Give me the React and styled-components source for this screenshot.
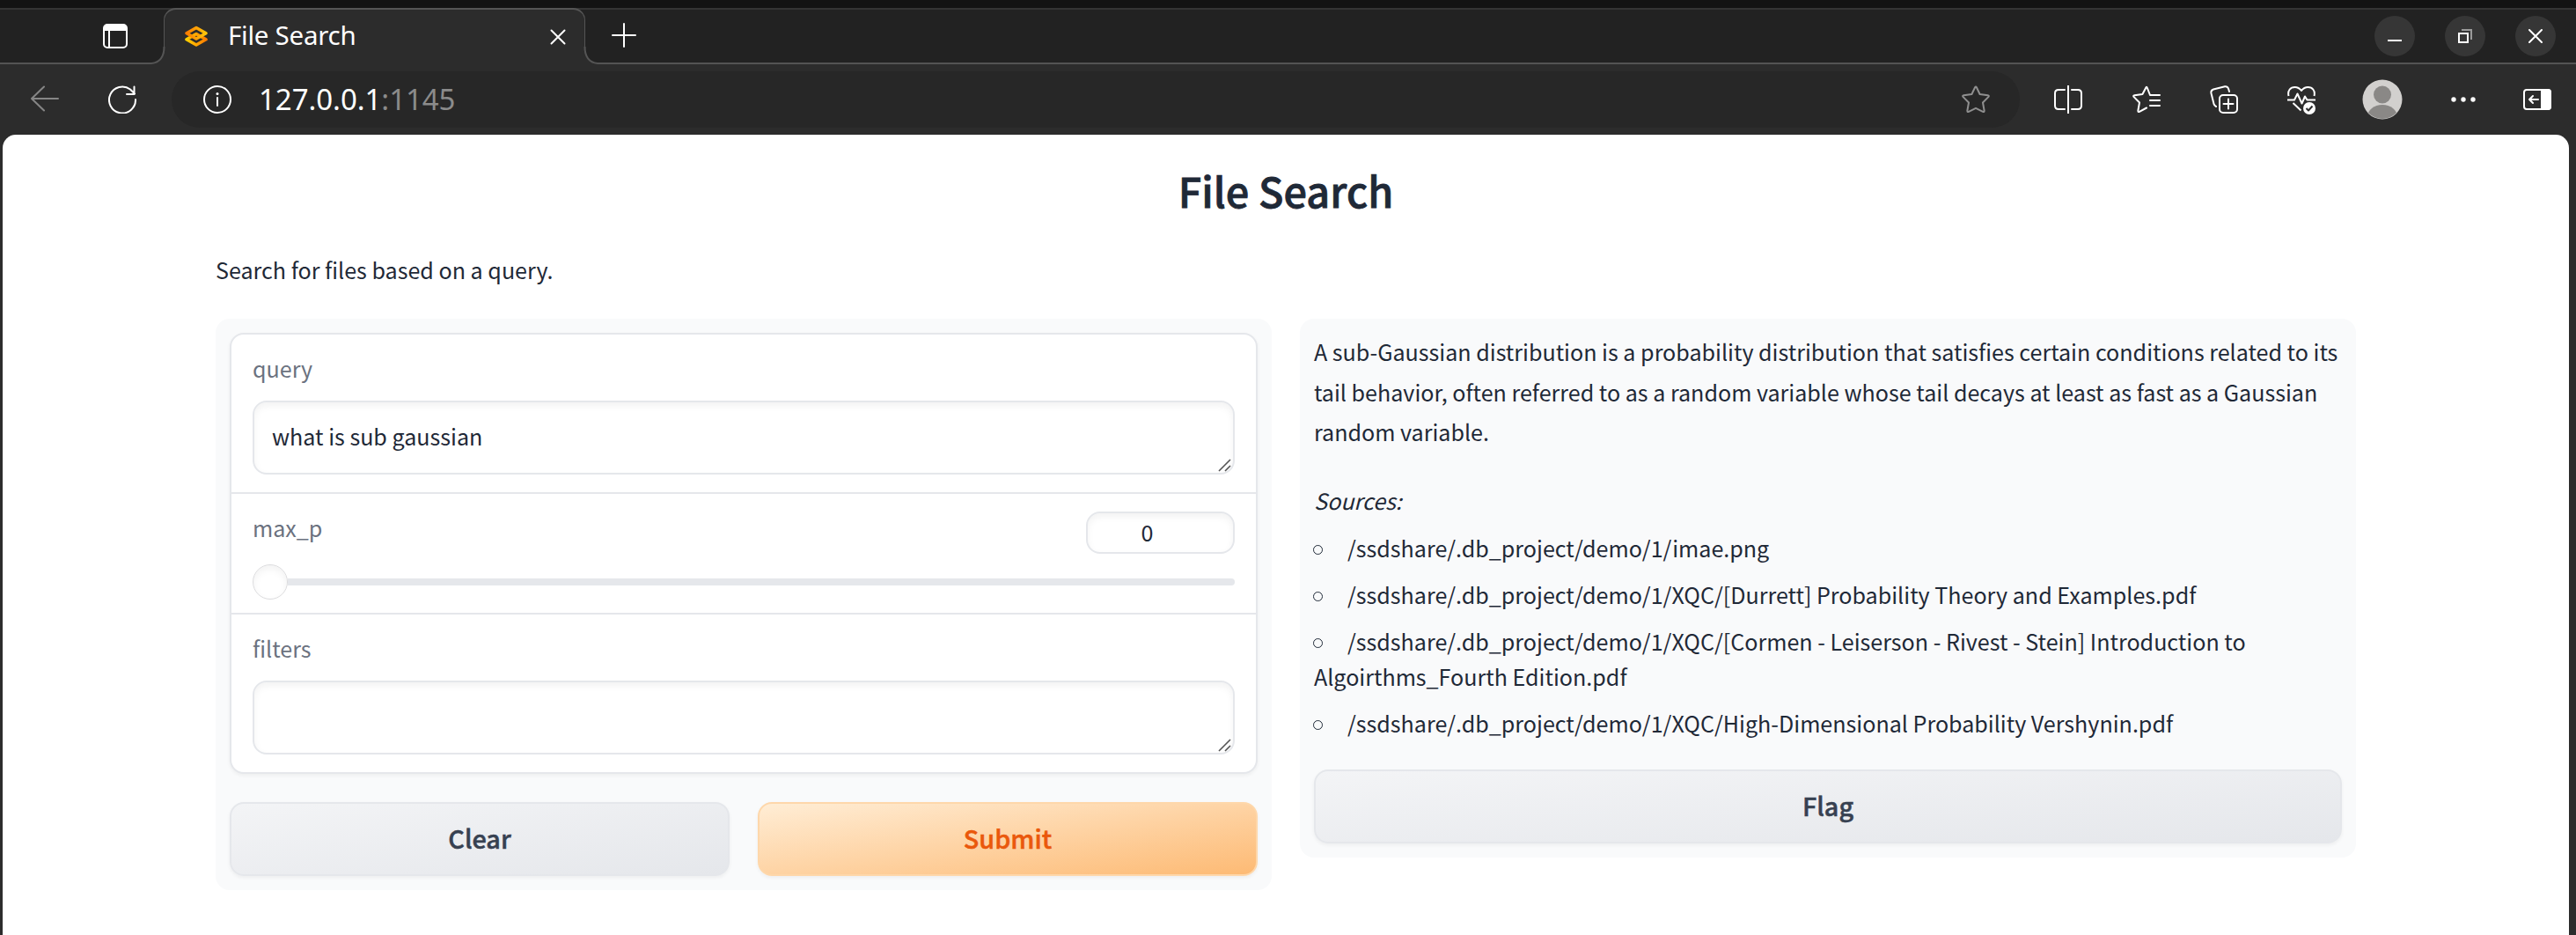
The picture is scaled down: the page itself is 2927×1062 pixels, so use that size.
import React from "react";
import styled, { createGlobalStyle, css } from "styled-components";

const Global = createGlobalStyle`
  *, *::before, *::after { box-sizing: border-box; }
  html, body, #root { height: 100%; }
  body { margin: 0; background: #2c2c2c; overflow: hidden; }
`;

const uiFont = `"Noto Sans", "Open Sans", sans-serif`;
const pageFont = `"Noto Sans CJK SC", "Noto Sans", sans-serif`;

const Window = styled.div`
  height: 1062px;
  width: 2927px;
  display: flex;
  flex-direction: column;
  background: #2c2c2c;
`;

const TabStrip = styled.div`
  flex: none;
  height: 73px;
  border-top: 9px solid #131313;
  background: #222;
  box-shadow: inset 0 2px #343434, inset 0 -2px #545454;
  display: flex;
  align-items: stretch;
`;

const TabActions = styled.div`
  width: 186px;
  padding: 18px 0 0 117px;
`;

const Tab = styled.div`
  position: relative;
  width: 479px;
  height: 64px;
  background: #2c2c2c;
  border: 1.5px solid #555;
  border-top-width: 2px;
  border-bottom: 0;
  border-radius: 14px 14px 0 0;
  display: flex;
  align-items: center;
  padding: 0 21px 0 22px;
`;

const TabFoot = styled.svg`
  position: absolute;
  bottom: 0;
  ${(p) => (p.$side === "left" ? "left: -15px;" : "right: -15px; transform: scaleX(-1);")}
`;

const Logo = styled.svg`
  margin-bottom: 2px;
`;

const TabTitle = styled.span`
  flex: 1;
  margin: 0 0 4px 22px;
  font: 400 29.5px/40px ${uiFont};
  letter-spacing: -0.25px;
  color: #fff;
`;

const NewTab = styled.div`
  padding: 17px 0 0 30px;
  flex: 1;
`;

const WindowButtons = styled.div`
  display: flex;
  gap: 34px;
  padding: 9px 23px 0 0;
`;

const WindowButton = styled.div`
  width: 46px;
  height: 46px;
  border-radius: 50%;
  background: #363636;
  display: flex;
  align-items: center;
  justify-content: center;
`;

const Toolbar = styled.div`
  flex: none;
  height: 80px;
  display: flex;
  align-items: center;
`;

const NavCell = styled.div`
  width: ${(p) => p.$w || 88}px;
  display: flex;
  align-items: center;
  justify-content: center;
`;

const AddressBar = styled.div`
  width: 2100px;
  height: 64px;
  margin: 0 11px 0 19px;
  padding: 0 34px 0 36px;
  border-radius: 32px;
  background: #272727;
  display: flex;
  align-items: center;
`;

const Url = styled.span`
  flex: 1;
  margin-left: 31px;
  font: 400 33px/48px ${uiFont};
  letter-spacing: -0.05px;
  color: #fff;
  white-space: nowrap;
`;

const Port = styled.span`
  color: #8b8b8b;
`;

const Page = styled.main`
  flex: 1;
  margin: 0 8px 0 3px;
  padding: 32px 242px 0;
  background: #fff;
  border-radius: 15px 15px 0 0;
  font-family: ${pageFont};
  font-size: 25.08px;
  color: #1f2937;
`;

const Title = styled.h1`
  margin: 0;
  text-align: center;
  font-size: 46.8px;
  line-height: 62px;
  font-weight: 500;
  letter-spacing: 0.05px;
  -webkit-text-stroke: 0.8px currentColor;
`;

const Description = styled.p`
  margin: 38px 0 35px;
  line-height: 42px;
`;

const Columns = styled.div`
  display: flex;
  align-items: flex-start;
  gap: 32px;
`;

const Panel = styled.section`
  flex: 1;
  min-width: 0;
  padding: 16px;
  border-radius: 16px;
  background: #f9fafb;
`;

const Form = styled.div`
  border: 2px solid #e5e7eb;
  border-radius: 16px;
  background: #fff;
  box-shadow: 0 2px 4px rgba(0, 0, 0, 0.05);
`;

const Field = styled.div`
  height: ${(p) => p.$h}px;
  padding: 20px 24px 0;
  & + & {
    border-top: 2px solid #e5e7eb;
  }
`;

const Label = styled.div`
  line-height: 36px;
  color: #6b7280;
`;

const box = css`
  border: 2px solid #e5e7eb;
  border-radius: 16px;
  background: #fff;
  box-shadow: inset 0 4px 8px rgba(0, 0, 0, 0.05);
`;

const TextBox = styled.div`
  ${box}
  position: relative;
  height: 84px;
  margin-top: 19px;
  padding: 18px 20px;
  line-height: 40px;
`;

const Grip = styled.svg`
  position: absolute;
  right: 2px;
  bottom: 1px;
`;

const SliderHead = styled.div`
  display: flex;
  justify-content: space-between;
`;

const NumberBox = styled.div`
  ${box}
  width: 169px;
  height: 48px;
  padding-right: 30px;
  text-align: center;
  line-height: 42px;
`;

const Slider = styled.div`
  display: flex;
  align-items: center;
  height: 40px;
  margin-top: 12px;
`;

const Thumb = styled.div`
  width: 40px;
  height: 40px;
  border-radius: 50%;
  border: 1px solid #dcdcde;
  background: #fff;
  box-shadow: inset 0 4px 8px rgba(0, 0, 0, 0.05);
`;

const Track = styled.div`
  flex: 1;
  height: 8px;
  border-radius: 0 4px 4px 0;
  background: #e5e7eb;
`;

const Buttons = styled.div`
  display: flex;
  gap: 32px;
  margin-top: 32px;
`;

const Button = styled.button`
  flex: 1;
  height: 84px;
  padding: 0 0 2px;
  border: 2px solid ${(p) => (p.$primary ? "#fed7aa" : "#e5e7eb")};
  border-radius: 16px;
  background: ${(p) =>
    p.$primary
      ? "linear-gradient(to bottom right, #ffedd5, #fdba74)"
      : "linear-gradient(to bottom right, #f3f4f6, #e5e7eb)"};
  box-shadow: 0 2px 4px rgba(0, 0, 0, 0.05);
  color: ${(p) => (p.$primary ? "#ea580c" : "#374151")};
  font: 500 28.8px/40px ${pageFont};
  -webkit-text-stroke: 0.5px currentColor;
`;

const Answer = styled.p`
  margin: -1px 0 0;
  line-height: 45.5px;
  white-space: nowrap;
`;

const Sources = styled.em`
  display: block;
  margin-top: 32.5px;
  line-height: 44px;
`;

const List = styled.ul`
  margin: 12px 0 0;
  padding: 0 0 1px;
  list-style: none;
`;

const Item = styled.li`
  line-height: 40px;
  white-space: nowrap;
  & + & {
    margin-top: 13px;
  }
`;

const Bullet = styled.span`
  display: inline-block;
  width: 11px;
  height: 11px;
  margin: 0 28px 3px -1px;
  border: 1.5px solid #1f2937;
  border-radius: 50%;
`;

const Icon = ({ w = 32, h = 32, c = "#fff", sw = 2, children }) => (
  <svg width={w} height={h} viewBox={`0 0 ${w} ${h}`} fill="none" stroke={c} strokeWidth={sw} strokeLinecap="round" strokeLinejoin="round">
    {children}
  </svg>
);

const starPath =
  "M15.1 2.2Q16 .6 16.9 2.2L20.6 10 29.6 11.3Q31.6 11.7 30.3 13.1L24 19.5 25.6 28.5Q25.8 30.6 24 29.9L16 25.8 8 29.9Q6.2 30.6 6.4 28.5L8 19.5 1.7 13.1Q.4 11.7 2.4 11.3L11.4 10Z";

const Foot = ({ side }) => (
  <TabFoot $side={side} width="16" height="20" viewBox="0 0 16 20">
    <path d="M0 20V19Q15 18 15 0H16V20Z" fill="#2c2c2c" />
    <path d="M0 19Q14.5 17.5 14.5 0" fill="none" stroke="#555" strokeWidth="2" />
  </TabFoot>
);

const ResizeGrip = () => (
  <Grip width="15" height="15" viewBox="0 0 15 15" stroke="#555" strokeWidth="1.6">
    <path d="M1 14L14 1M8 14L14 8" />
  </Grip>
);

export default function App() {
  return (
    <Window>
      <Global />
      <TabStrip>
        <TabActions>
          <Icon w={28} h={28}>
            <rect x="1" y="1" width="26" height="26" rx="4" />
            <path d="M1 8V5Q1 1 5 1H23Q27 1 27 5V8Z" fill="#fff" stroke="none" />
            <path d="M1 7H27M7 8V27" />
          </Icon>
        </TabActions>
        <Tab>
          <Foot side="left" />
          <Foot side="right" />
          <Logo width="28" height="24" viewBox="0 0 28 24" fill="none" strokeWidth="3.6" strokeLinejoin="round">
            <defs>
              <linearGradient id="logoTop" x1="0" y1="0" x2="1" y2="0">
                <stop stopColor="#ff7c00" />
                <stop offset="1" stopColor="#ffc60a" />
              </linearGradient>
              <linearGradient id="logoBottom" x1="0" y1="0" x2="1" y2="0">
                <stop stopColor="#ffd000" />
                <stop offset="1" stopColor="#ff7c00" />
              </linearGradient>
            </defs>
            <path d="M14 9.5L25 15.8 14 22 3 15.8Z" stroke="url(#logoBottom)" />
            <path d="M14 2.5L25 8.7 14 15 3 8.7Z" stroke="url(#logoTop)" />
          </Logo>
          <TabTitle>File Search</TabTitle>
          <Icon w={18} h={18}>
            <path d="M1.5 1.5L16.5 16.5M16.5 1.5L1.5 16.5" />
          </Icon>
        </Tab>
        <NewTab>
          <Icon w={28} h={28}>
            <path d="M14 1V27M1 14H27" />
          </Icon>
        </NewTab>
        <WindowButtons>
          <WindowButton>
            <Icon w={16} h={16}>
              <path d="M1 13H15" strokeLinecap="square" />
            </Icon>
          </WindowButton>
          <WindowButton>
            <svg width="16" height="16" viewBox="0 0 16 16" fill="none" strokeWidth="2">
              <path d="M4 1H15V12" stroke="#9a9a9a" />
              <rect x="1" y="5" width="10" height="10" stroke="#fff" />
            </svg>
          </WindowButton>
          <WindowButton>
            <Icon w={16} h={16}>
              <path d="M1 1L15 15M15 1L1 15" />
            </Icon>
          </WindowButton>
        </WindowButtons>
      </TabStrip>

      <Toolbar>
        <NavCell $w={102}>
          <Icon c="#868686">
            <path d="M31 15H1M15 1.5L1 15 15 28.5" />
          </Icon>
        </NavCell>
        <NavCell $w={74}>
          <Icon>
            <path d="M31 16A15 15 0 1 1 25 4.5L30 9.5M29.5 1.5V10H21" />
          </Icon>
        </NavCell>
        <AddressBar>
          <Icon>
            <circle cx="16" cy="16" r="15" />
            <path d="M16 14V23" />
            <circle cx="16" cy="9.5" r="1.5" fill="#fff" stroke="none" />
          </Icon>
          <Url>
            127.0.0.1<Port>:1145</Port>
          </Url>
          <Icon c="#8f8f8f">
            <path d={starPath} />
          </Icon>
        </AddressBar>
        <NavCell>
          <Icon>
            <path d="M16 0V32M12 5H5Q1 5 1 9V23Q1 27 5 27H12M20 5H27Q31 5 31 9V23Q31 27 27 27H20" />
          </Icon>
        </NavCell>
        <NavCell $w={89}>
          <Icon>
            <path d="M20 11H31M20 17H31M20 23H31M20 11L16.9 3Q16 .6 15.1 3L11.4 10 2.4 11.3Q.4 11.7 1.7 13.1L8 19.5 6.4 28.5Q6.2 30.6 8 29.9L16 25.5" />
          </Icon>
        </NavCell>
        <NavCell>
          <Icon>
            <rect x="11" y="11" width="20" height="20" rx="4" />
            <path d="M21 15.5V26.5M15.5 21H26.5M7 24Q5 23 4.5 21L1.5 9Q.8 5.5 4 4.5L17 1.2Q20 .8 21 3.5L22 7" />
          </Icon>
        </NavCell>
        <NavCell>
          <svg width="32" height="34" viewBox="0 0 32 34" fill="none" stroke="#fff" strokeWidth="2" strokeLinejoin="round">
            <path d="M1.5 13C0 7 3.5 3 8.5 3 12 3 14.5 5 16 7 17.5 5 20 3 23.5 3 28.5 3 32 7 30.5 13" />
            <path d="M0 17.5H8L11.5 10.5 16.5 21.5 20 13.5 22.5 17.5H32M6.5 21L15.500 29.500" />
            <circle cx="25" cy="27" r="7" fill="#fff" stroke="none" />
            <path d="M21.5 27L24 29.5 28.5 24.5" stroke="#2c2c2c" />
          </svg>
        </NavCell>
        <NavCell $w={96}>
          <svg width="46" height="46" viewBox="0 0 46 46">
            <defs>
              <clipPath id="avatar">
                <circle cx="23" cy="23" r="22" />
              </clipPath>
            </defs>
            <circle cx="23" cy="23" r="22.5" fill="#d2d0ce" />
            <circle cx="23" cy="17.5" r="10" fill="#8a8886" />
            <ellipse cx="23" cy="43" rx="17" ry="14" fill="#8a8886" clipPath="url(#avatar)" />
          </svg>
        </NavCell>
        <NavCell $w={88}>
          <svg width="28" height="8" viewBox="0 0 28 8" fill="#fff">
            <circle cx="3" cy="4" r="2.7" />
            <circle cx="14" cy="4" r="2.7" />
            <circle cx="25" cy="4" r="2.7" />
          </svg>
        </NavCell>
        <NavCell $w={80}>
          <Icon h={24}>
            <rect x="1" y="1" width="30" height="22" rx="3" />
            <path d="M20 0H28Q32 0 32 4V20Q32 24 28 24H20Z" fill="#fff" stroke="none" />
            <path d="M17 12H7M11 8L7 12 11 16" />
          </Icon>
        </NavCell>
      </Toolbar>

      <Page>
        <Title>File Search</Title>
        <Description>Search for files based on a query.</Description>
        <Columns>
          <Panel>
            <Form>
              <Field $h={179}>
                <Label>query</Label>
                <TextBox>
                  what is sub gaussian
                  <ResizeGrip />
                </TextBox>
              </Field>
              <Field $h={137}>
                <SliderHead>
                  <Label>max_p</Label>
                  <NumberBox>0</NumberBox>
                </SliderHead>
                <Slider>
                  <Thumb />
                  <Track />
                </Slider>
              </Field>
              <Field $h={181}>
                <Label>filters</Label>
                <TextBox>
                  <ResizeGrip />
                </TextBox>
              </Field>
            </Form>
            <Buttons>
              <Button>Clear</Button>
              <Button $primary>Submit</Button>
            </Buttons>
          </Panel>
          <Panel>
            <Answer>
              A sub-Gaussian distribution is a probability distribution that satisfies certain conditions related to its
              <br />
              tail behavior, often referred to as a random variable whose tail decays at least as fast as a Gaussian
              <br />
              random variable.
            </Answer>
            <Sources>Sources:</Sources>
            <List>
              <Item><Bullet />/ssdshare/.db_project/demo/1/imae.png</Item>
              <Item><Bullet />/ssdshare/.db_project/demo/1/XQC/[Durrett] Probability Theory and Examples.pdf</Item>
              <Item>
                <Bullet />/ssdshare/.db_project/demo/1/XQC/[Cormen - Leiserson - Rivest - Stein] Introduction to
                <br />
                Algoirthms_Fourth Edition.pdf
              </Item>
              <Item><Bullet />/ssdshare/.db_project/demo/1/XQC/High-Dimensional Probability Vershynin.pdf</Item>
            </List>
            <Buttons>
              <Button>Flag</Button>
            </Buttons>
          </Panel>
        </Columns>
      </Page>
    </Window>
  );
}
